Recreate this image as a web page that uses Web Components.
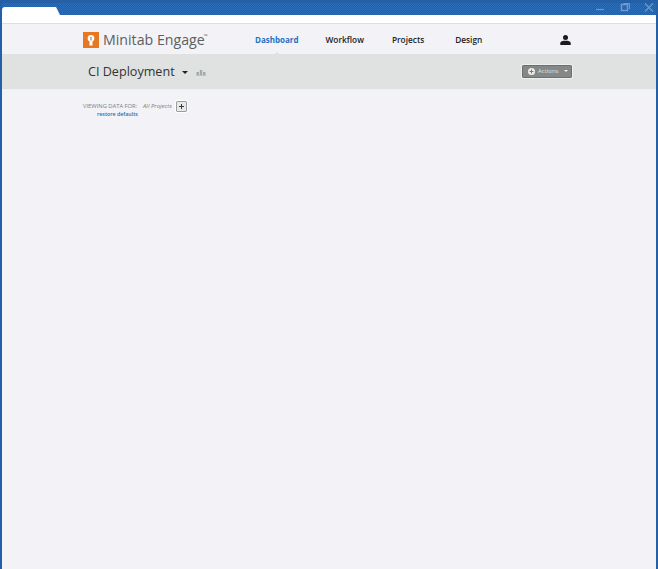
<!DOCTYPE html>
<html><head><meta charset="utf-8"><title>Minitab Engage</title>
<style>html,body{margin:0;padding:0;height:100%;background:#f2f2f7}</style></head>
<body><app-window>
<title-bar slot="bar"></title-bar>
<main-nav></main-nav>
<project-band></project-band>
<data-filter></data-filter>
</app-window>
<script>
function def(name, html){
  customElements.define(name, class extends HTMLElement{
    constructor(){super();this.attachShadow({mode:'open'}).innerHTML=html;}
  });
}
def('app-window',`<style>
:host{display:flex;flex-direction:column;box-sizing:border-box;width:658px;height:569px;border-left:2px solid #2560a6;border-right:2px solid #2560a6;background:#f2f2f7;font-family:"Open Sans","Liberation Sans",sans-serif;overflow:hidden}
</style><slot name="bar"></slot><slot></slot>`);
def('title-bar',`<style>
:host{display:block;margin:0 -2px}
.bar{height:15px;box-sizing:border-box;padding-left:2px;display:flex;align-items:flex-end;position:relative;
 border-top:3px solid #2560a6;padding-top:4px;
 background:repeating-conic-gradient(#2e6fb9 0 25%,#1f5ea8 0 50%) 0 0/2px 2px;}
.tab{width:58px;height:8px;background:#fff;border-radius:3px 0 0 0;clip-path:polygon(0 0,54px 0,58px 100%,0 100%)}
.ctl{position:absolute;right:0;top:-1px;height:12px;display:flex;align-items:center}
svg{display:block}
.white{height:8px;background:#fff;margin:0 2px;border-bottom:1px solid #dfdfe3}
</style><div class="bar"><div class="tab"></div>
<svg class="ctl" width="68" height="12" viewBox="0 0 68 12" fill="none" stroke="#6f9bd0">
<path d="M6 7.500H14" stroke-width="1.200"/>
<rect x="31.500" y="2.500" width="6" height="6" stroke-width="1.500"/><path d="M33.500 1.500H39.500V7" stroke-width="1"/>
<path d="M55 1.500L63 9.500M63 1.500L55 9.500" stroke-width="1.100"/>
</svg></div><div class="white"></div>`);
def('main-nav',`<style>
:host{display:flex;box-sizing:border-box;height:30px;align-items:center;position:relative;padding-left:81px;background:#f2f2f7;font-family:"Open Sans","Liberation Sans",sans-serif}
.logo{width:16px;height:16px;background:#e87722;display:flex;align-items:center;justify-content:center;margin-top:2px}
.brand{font-size:14.200px;color:#5d5f61;margin-left:4px;width:152px;margin-top:1px;white-space:nowrap}
.brand sup{font-size:5px;vertical-align:7px;margin-left:-1px}
nav{display:flex;font-size:8.300px;font-weight:600;color:#222;margin-top:1px;width:305px}
nav a{position:relative;white-space:nowrap;margin-right:28px}
nav a:nth-child(3){margin-right:31px}
nav a.on{color:#1e73c4;font-weight:700;font-size:8px;margin-right:27px}
nav a.on::after{content:"";position:absolute;left:50%;margin-left:-6px;bottom:-12px;border:6px solid transparent;border-top:0;border-bottom:5px solid #e0e2e1}
.user{margin-top:2px}
</style>
<span class="logo"><svg width="10" height="13" viewBox="0 0 10 13"><circle cx="5" cy="4.300" r="3.300" fill="#fff"/><rect x="3.500" y="7" width="3" height="4.500" fill="#fff"/><rect x="4.200" y="3" width="1.600" height="3.500" fill="#c9a184"/></svg></span>
<span class="brand">Minitab Engage<sup>™</sup></span>
<nav><a class="on">Dashboard</a><a>Workflow</a><a>Projects</a><a>Design</a></nav>
<svg class="user" width="11" height="10" viewBox="0 0 11 10" fill="#1b1b1b"><circle cx="5.500" cy="2.600" r="2.500"/><path d="M0.300 10V8.200C0.300 6.400 3 5.800 5.500 5.800S10.700 6.400 10.700 8.200V10Z"/></svg>`);
def('project-band',`<style>
:host{display:flex;box-sizing:border-box;height:36px;align-items:center;padding:0 84px 0 86px;background:#e0e2e1;border-bottom:1px solid #eeeff2;font-family:"Open Sans","Liberation Sans",sans-serif}
h1{margin:0;font-size:12.600px;font-weight:400;color:#333;white-space:nowrap;margin-top:-1px}
.caret{width:0;height:0;border:3px solid transparent;border-top:3px solid #222;border-bottom:0;margin:2px 0 0 7px}
.org{margin:2px auto 0 8px}
button{all:unset;box-sizing:border-box;width:50px;height:13px;display:flex;align-items:center;gap:3px;padding-left:5px;background:#858886;border:1px solid #6c7072;outline:1px solid #eef0ef;border-radius:1px;color:#dfe1e2;font-size:6px;font-family:inherit;margin-top:-1px}
.plus{width:7px;height:7px;display:flex}
.c2{width:0;height:0;border:2.500px solid transparent;border-top:2.500px solid #eee;border-bottom:0;margin-left:3px}
</style>
<h1>CI Deployment</h1><span class="caret"></span>
<svg class="org" width="10" height="6" viewBox="0 0 10 6" fill="#a3aaae"><rect x="3.800" y="0" width="2.400" height="5"/><rect x="0.500" y="2" width="2.500" height="3"/><rect x="7" y="2" width="2.500" height="3"/><rect x="0" y="5" width="10" height="1" fill="#bcc1c3"/></svg>
<button><svg class="plus" viewBox="0 0 7 7"><circle cx="3.500" cy="3.500" r="3.500" fill="#eee"/><path d="M3 1.500H4V3H5.500V4H4V5.500H3V4H1.500V3H3Z" fill="#777"/></svg>Actions<span class="c2"></span></button>`);
def('data-filter',`<style>
:host{display:block;padding:10px 0 0 81px;font-family:"Open Sans","Liberation Sans",sans-serif;font-size:5.800px;line-height:8px;color:#7b7d7f}
.row{display:flex;align-items:center;height:12px}
.lab{width:60px;white-space:nowrap}
em{white-space:nowrap;width:33px;color:#7b7d7f;font-size:6px}
.add{box-sizing:border-box;width:11px;height:11px;border:1px solid #9a9c9d;outline:1px solid #fff;border-radius:1px;background:#e7e8e8;display:flex;align-items:center;justify-content:center}
a{display:block;margin-left:14px;color:#2470b8;font-weight:600;font-size:5.300px;line-height:7px;margin-top:-1px}
</style>
<div class="row"><span class="lab">VIEWING DATA FOR:</span><em>All Projects</em><span class="add"><svg width="5" height="5" viewBox="0 0 5 5" fill="#3a3a3a"><path d="M2 0H3V2H5V3H3V5H2V3H0V2H2Z"/></svg></span></div>
<a>restore defaults</a>`);
</script></body></html>
